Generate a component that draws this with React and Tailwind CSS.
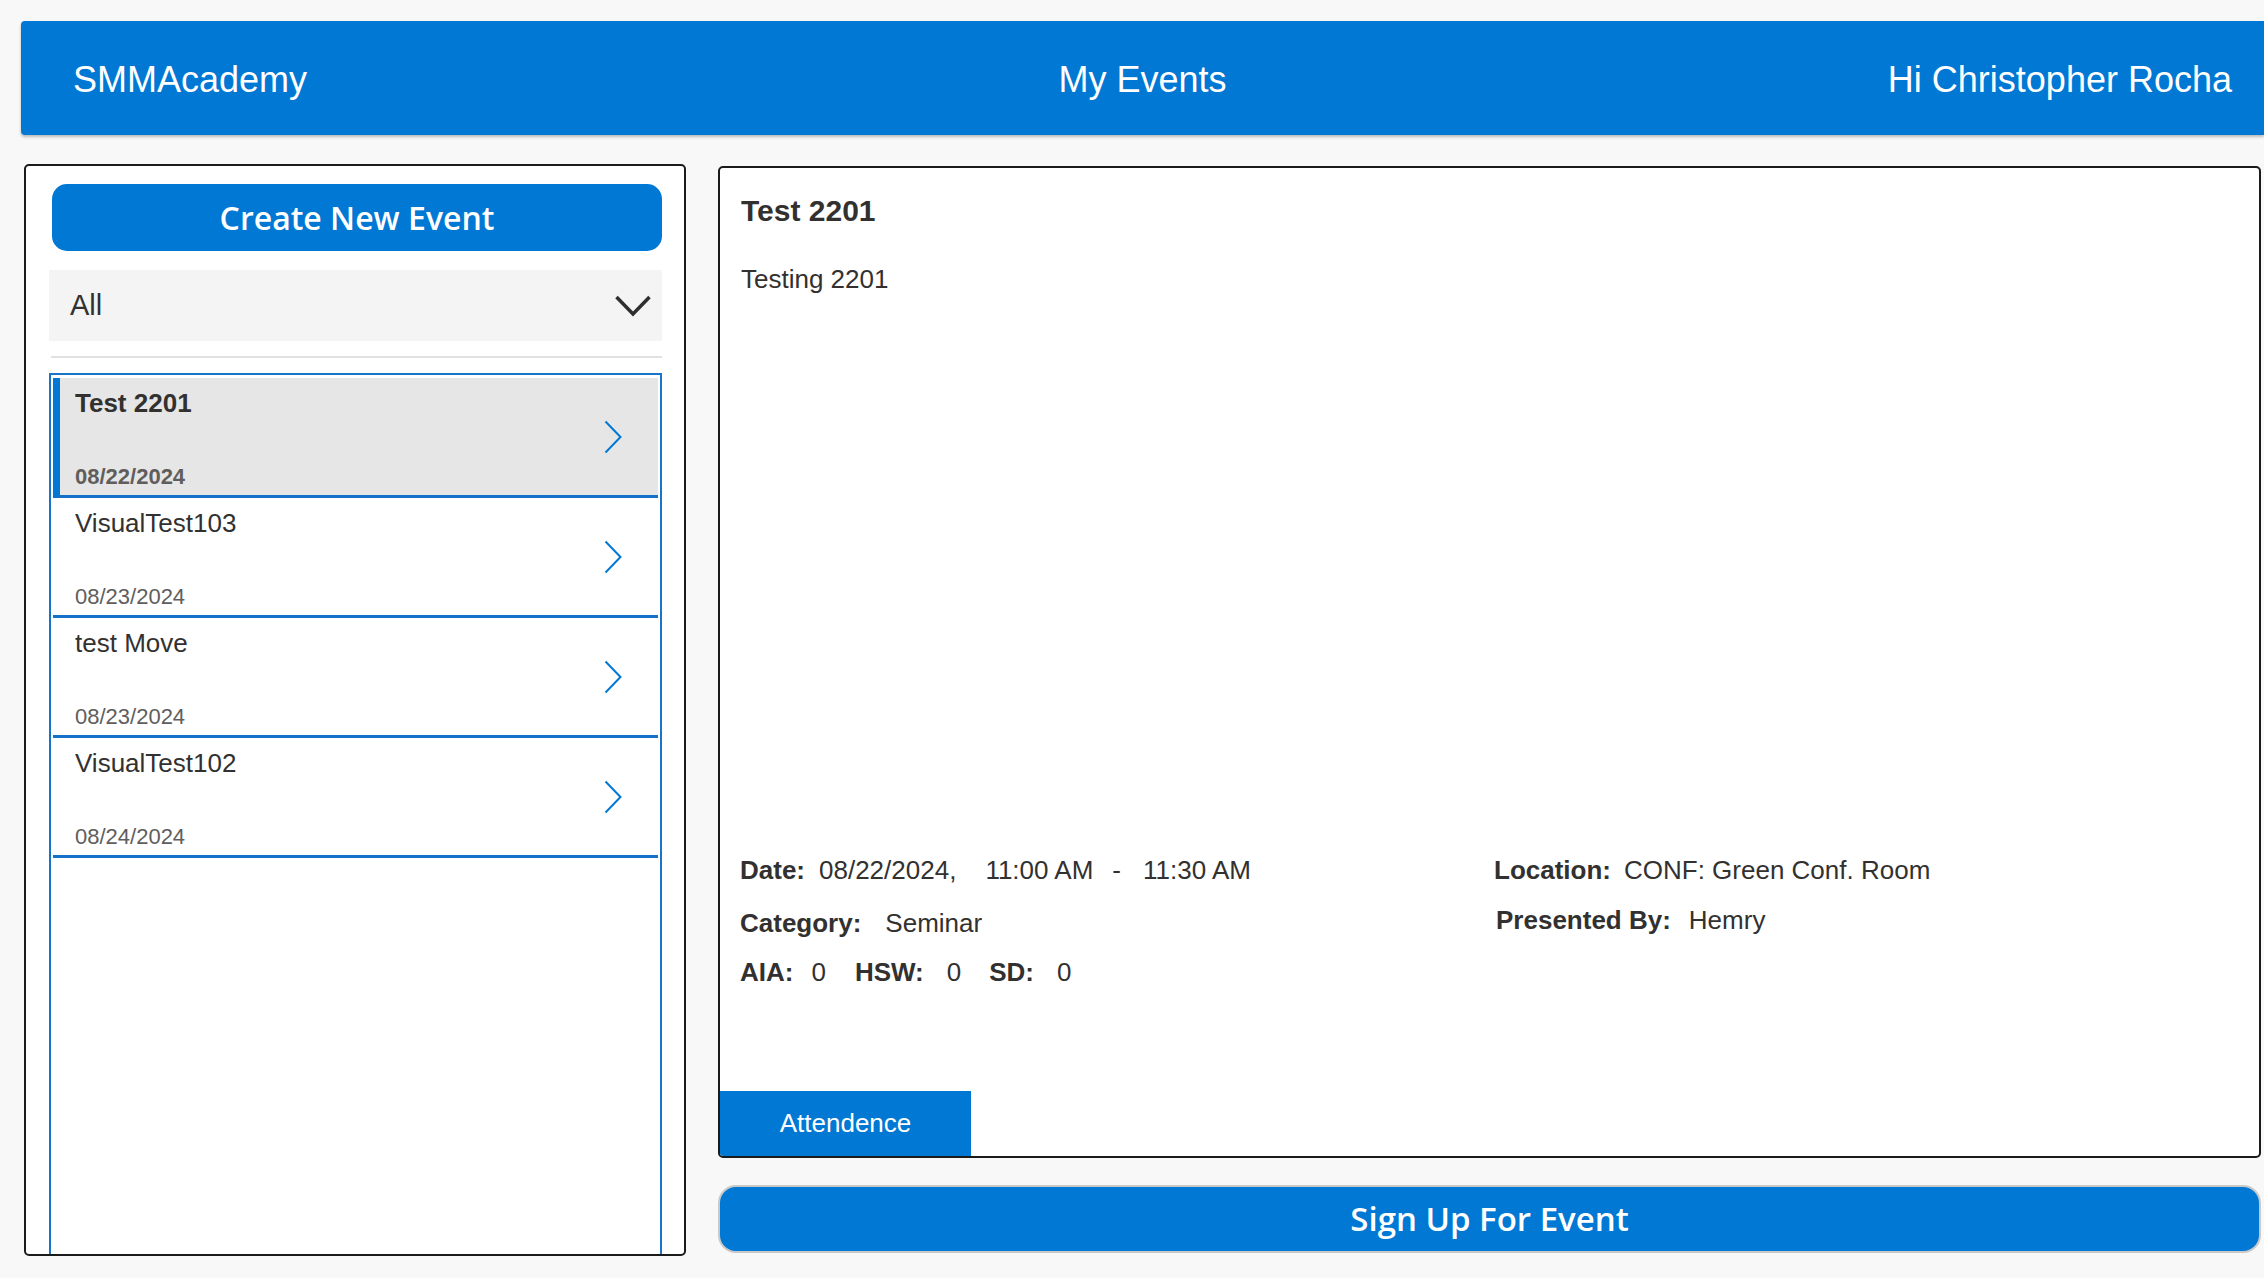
import React from "react";

const events = [
  { title: "Test 2201", date: "08/22/2024", selected: true },
  { title: "VisualTest103", date: "08/23/2024" },
  { title: "test Move", date: "08/23/2024" },
  { title: "VisualTest102", date: "08/24/2024" },
];

const Chevron = () => (
  <svg width="18" height="34" viewBox="0 0 18 34" fill="none">
    <path d="M1.5 1.5 L16.5 17 L1.5 32.5" stroke="#0078d4" strokeWidth="2" />
  </svg>
);

const EventRow = ({ title, date, selected }) => (
  <div
    className={`h-[120px] flex items-center border-b-[3px] border-[#1672c8] pr-[36px] ${
      selected ? "bg-[#e6e6e6] border-l-[7px] border-l-[#0078d4] pl-[15px]" : "bg-white pl-[22px]"
    }`}
  >
    <div className="flex-1 h-full flex flex-col justify-between pt-[6px] pb-[2px]">
      <div className={`text-[26px] text-[#323130] ${selected ? "font-bold" : ""}`}>{title}</div>
      <div className={`text-[22px] text-[#605e5c] ${selected ? "font-bold" : ""}`}>{date}</div>
    </div>
    <Chevron />
  </div>
);

const Label = ({ children, className = "" }) => (
  <span className={`font-bold text-[#323130] ${className}`}>{children}</span>
);

const App = () => {
  return (
    <div
      className="min-h-screen bg-[#f8f8f8] pt-[21px] pl-[21px] text-[#323130]"
      style={{ fontFamily: '"Liberation Sans", Arial, sans-serif' }}
    >
      {/* top bar */}
      <div className="h-[114px] bg-[#0078d4] rounded-l-[4px] shadow-[0_2px_3px_rgba(0,0,0,0.25)] grid grid-cols-3 items-center text-white text-[36px] pt-[3px]">
        <div className="pl-[52px]">SMMAcademy</div>
        <div className="text-center">My Events</div>
        <div className="text-right pr-[32px]">Hi Christopher Rocha</div>
      </div>

      <div className="flex gap-[32px] pl-[3px] mt-[29px]">
        {/* left panel */}
        <div className="w-[662px] h-[1092px] bg-white border-2 border-[#1b1b1b] rounded-[5px] pt-[18px] pl-[23px] pr-[22px] flex flex-col overflow-hidden">
          <button
            className="ml-[3px] h-[67px] rounded-[15px] bg-[#0078d4] text-white text-[32px] font-semibold"
            style={{ fontFamily: '"Open Sans", sans-serif' }}
          >
            Create New Event
          </button>
          <div className="mt-[19px] h-[71px] bg-[#f4f4f4] flex items-center justify-between pl-[21px] pr-[10px]">
            <span className="text-[29px] text-[#323130]">All</span>
            <svg width="38" height="24" viewBox="0 0 38 24" fill="none">
              <path d="M2.5 3 L19 20 L35.5 3" stroke="#2f2f2f" strokeWidth="3.5" />
            </svg>
          </div>
          <div className="mt-[15px] ml-[2px] h-[2px] bg-[#e1e1e1]" />
          <div className="mt-[15px] flex-1 border-2 border-b-0 border-[#1a74c9] px-[2px] pt-[3px]">
            {events.map((e) => (
              <EventRow key={e.title} {...e} />
            ))}
          </div>
        </div>

        {/* right column */}
        <div className="w-[1543px] mt-[2px] flex flex-col">
          <div className="h-[992px] bg-white border-2 border-[#1b1b1b] rounded-[5px] overflow-hidden flex flex-col">
            <div className="pl-[21px] pt-[20px]">
              <div className="text-[30px] font-bold text-[#323130]">Test 2201</div>
              <div className="mt-[27px] text-[26px] text-[#323130]">Testing 2201</div>
            </div>

            <div className="mt-auto pl-[20px] flex text-[26px]">
              <div className="w-[754px]">
                <div className="h-[30px] flex items-center">
                  <Label>Date:</Label>
                  <span className="ml-[14px]">08/22/2024,</span>
                  <span className="ml-[29px]">11:00 AM</span>
                  <span className="ml-[19px]">-</span>
                  <span className="ml-[22px]">11:30 AM</span>
                </div>
                <div className="mt-[23px] h-[30px] flex items-center">
                  <Label>Category:</Label>
                  <span className="ml-[24px]">Seminar</span>
                </div>
                <div className="mt-[19px] h-[30px] flex items-center">
                  <Label>AIA:</Label>
                  <span className="ml-[18px]">0</span>
                  <Label className="ml-[29px]">HSW:</Label>
                  <span className="ml-[23px]">0</span>
                  <Label className="ml-[28px]">SD:</Label>
                  <span className="ml-[23px]">0</span>
                </div>
              </div>
              <div className="flex-1">
                <div className="h-[30px] flex items-center">
                  <Label>Location:</Label>
                  <span className="ml-[13px]">CONF: Green Conf. Room</span>
                </div>
                <div className="mt-[20px] h-[30px] flex items-center pl-[2px]">
                  <Label>Presented By:</Label>
                  <span className="ml-[18px]">Hemry</span>
                </div>
              </div>
            </div>

            <button className="mt-[104px] w-[251px] h-[65px] bg-[#0078d4] text-white text-[26px] shrink-0">
              Attendence
            </button>
          </div>

          <button
            className="mt-[27px] h-[68px] rounded-[18px] bg-[#0078d4] border-2 border-[#c9c9c9] text-white text-[33px] font-semibold"
            style={{ fontFamily: '"Open Sans", sans-serif' }}
          >
            Sign Up For Event
          </button>
        </div>
      </div>
    </div>
  );
};

export default App;
